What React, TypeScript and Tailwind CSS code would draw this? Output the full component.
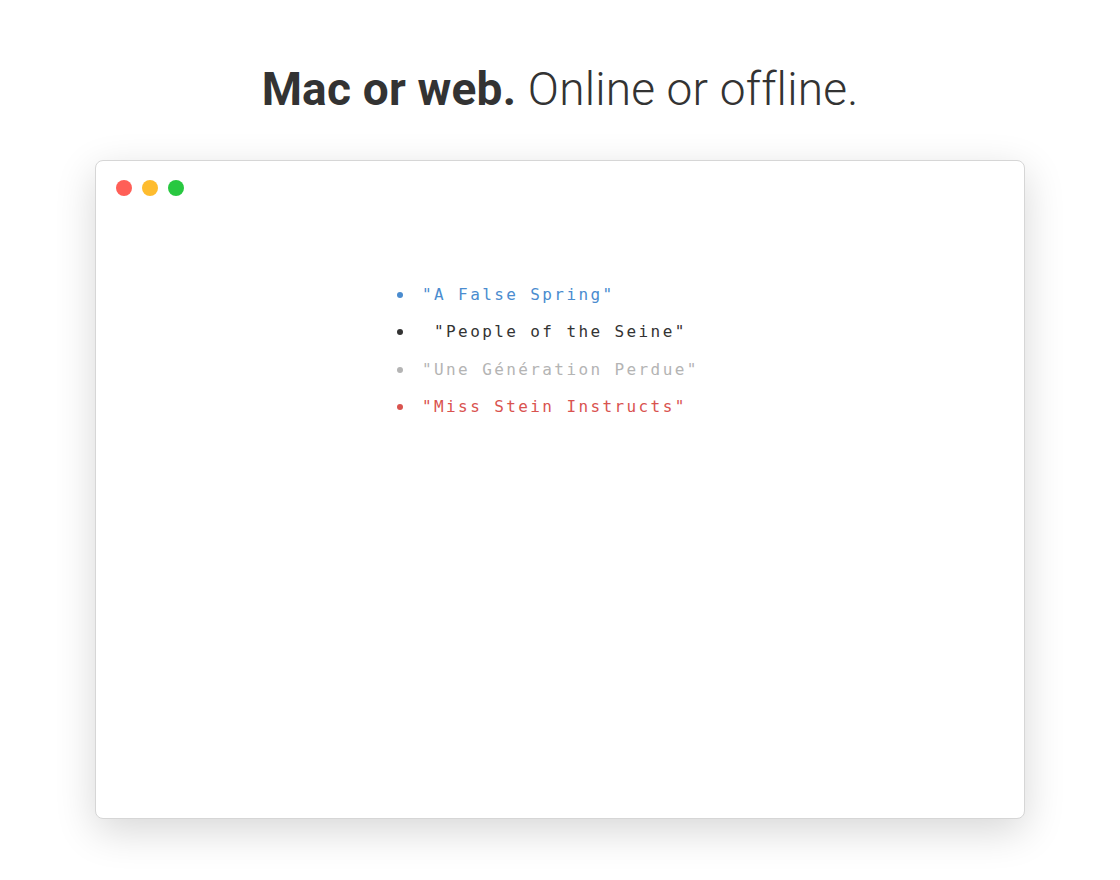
import React from "react";

const items = [
  { text: '"A False Spring"', color: "text-[#4a8ccf]", dot: "bg-[#4a8ccf]" },
  { text: '\u00a0"People of the Seine"', color: "text-[#333333]", dot: "bg-[#333333]" },
  { text: '"Une Génération Perdue"', color: "text-[#b4b4b4]", dot: "bg-[#b4b4b4]" },
  { text: '"Miss Stein Instructs"', color: "text-[#d9534f]", dot: "bg-[#d9534f]" },
];

export default function App() {
  return (
    <div className="w-[1120px] h-[880px] bg-white overflow-hidden">
      <h1 className="pt-[66px] text-center text-[46px] leading-[46px] text-[#333333] tracking-[0.2px]" style={{ fontFamily: "Roboto, 'Liberation Sans', sans-serif" }}>
        <span className="font-bold">Mac or web.</span>{" "}
        <span className="font-light">Online or offline.</span>
      </h1>
      <div className="mt-[48px] mx-auto w-[930px] h-[659px] rounded-[8px] border border-[#d6d6d6] bg-white shadow-[0_12px_40px_rgba(0,0,0,0.16)]">
        <div className="flex gap-[10px] pl-[20px] pt-[19px]">
          <div className="w-[16px] h-[16px] rounded-full bg-[#ff5f57]" />
          <div className="w-[16px] h-[16px] rounded-full bg-[#febc2e]" />
          <div className="w-[16px] h-[16px] rounded-full bg-[#28c840]" />
        </div>
        <div className="mt-[80px] pl-[301px] flex flex-col">
          {items.map((it, i) => (
            <div key={i} className="flex items-center h-[37.5px]">
              <div className={`w-[6px] h-[6px] rounded-full ${it.dot}`} />
              <span
                className={`ml-[19px] text-[16px] tracking-[2.4px] whitespace-pre ${it.color}`}
                style={{ fontFamily: "'DejaVu Sans Mono', 'Liberation Mono', monospace" }}
              >
                {it.text}
              </span>
            </div>
          ))}
        </div>
      </div>
    </div>
  );
}
